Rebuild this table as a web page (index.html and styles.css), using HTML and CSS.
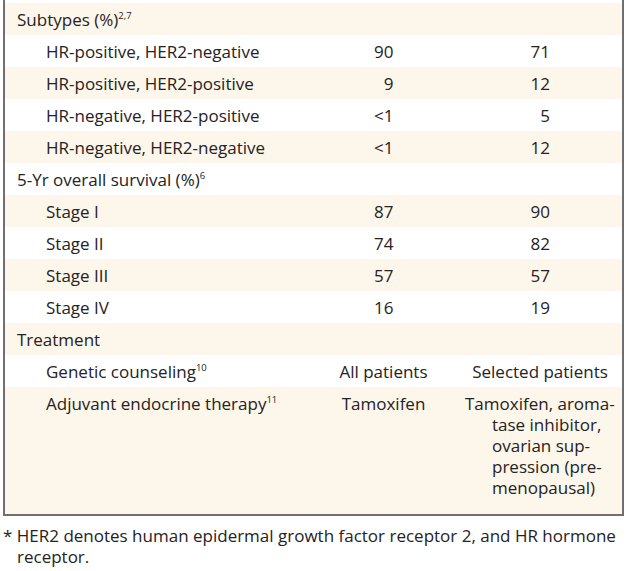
FILE: index.html
```html
<!DOCTYPE html>
<html lang="en">
<head>
<meta charset="utf-8">
<title>Breast cancer table</title>
<link rel="stylesheet" href="styles.css">
</head>
<body>
<div class="table">
  <div class="row shade"><div class="label head">Subtypes (%)<sup>2,7</sup></div><div class="val"></div><div class="val"></div></div>
  <div class="row"><div class="label sub">HR-positive, HER2-negative</div><div class="val"><span class="num">90</span></div><div class="val"><span class="num">71</span></div></div>
  <div class="row shade"><div class="label sub">HR-positive, HER2-positive</div><div class="val"><span class="num">9</span></div><div class="val"><span class="num">12</span></div></div>
  <div class="row"><div class="label sub">HR-negative, HER2-positive</div><div class="val"><span class="num">&lt;1</span></div><div class="val"><span class="num">5</span></div></div>
  <div class="row shade"><div class="label sub">HR-negative, HER2-negative</div><div class="val"><span class="num">&lt;1</span></div><div class="val"><span class="num">12</span></div></div>
  <div class="row"><div class="label head">5-Yr overall survival (%)<sup>6</sup></div><div class="val"></div><div class="val"></div></div>
  <div class="row shade"><div class="label sub">Stage I</div><div class="val"><span class="num">87</span></div><div class="val"><span class="num">90</span></div></div>
  <div class="row"><div class="label sub">Stage II</div><div class="val"><span class="num">74</span></div><div class="val"><span class="num">82</span></div></div>
  <div class="row shade"><div class="label sub">Stage III</div><div class="val"><span class="num">57</span></div><div class="val"><span class="num">57</span></div></div>
  <div class="row"><div class="label sub">Stage IV</div><div class="val"><span class="num">16</span></div><div class="val"><span class="num">19</span></div></div>
  <div class="row shade"><div class="label head">Treatment</div><div class="val"></div><div class="val"></div></div>
  <div class="row"><div class="label sub">Genetic counseling<sup>10</sup></div><div class="val">All patients</div><div class="val">Selected patients</div></div>
  <div class="row shade last"><div class="label sub">Adjuvant endocrine therapy<sup>11</sup></div><div class="val">Tamoxifen</div><div class="val"><div class="hang">Tamoxifen, aroma-<br>tase inhibitor,<br>ovarian sup-<br>pression (pre-<br>menopausal)</div></div></div>
</div>
<p class="note">* HER2 denotes human epidermal growth factor receptor 2, and HR hormone receptor.</p>
</body>
</html>
```

FILE: styles.css
```css
html, body {
  margin: 0;
  padding: 0;
  background: #ffffff;
}
body {
  font-family: "Open Sans", Lato, sans-serif;
  font-size: 17px;
  color: #252223;
  width: 626px;
}
.table {
  margin-left: 3px;
  width: 617px;
  padding-top: 3px;
  border-left: 2px solid #6f6f6f;
  border-right: 2px solid #6f6f6f;
  border-bottom: 2px solid #6f6f6f;
}
.row {
  display: grid;
  grid-template-columns: 300px 157px 156px;
  line-height: 21px;
  padding: 5.5px 0;
}
.row.shade {
  background: #fdf6ea;
}
.row.last {
  padding-bottom: 16px;
}
.label.head {
  padding-left: 12px;
}
.label.sub {
  padding-left: 41px;
}
.val {
  text-align: center;
}
.num {
  display: inline-block;
  min-width: 20px;
  text-align: right;
}
.hang {
  text-align: left;
  padding-left: 30px;
  text-indent: -27px;
  white-space: nowrap;
}
sup {
  font-size: 9.5px;
  line-height: 0;
  vertical-align: 7px;
}
.note {
  margin: 9px 0 0 3px;
  padding-left: 14px;
  text-indent: -14px;
  line-height: 21px;
  width: 608px;
}
```
